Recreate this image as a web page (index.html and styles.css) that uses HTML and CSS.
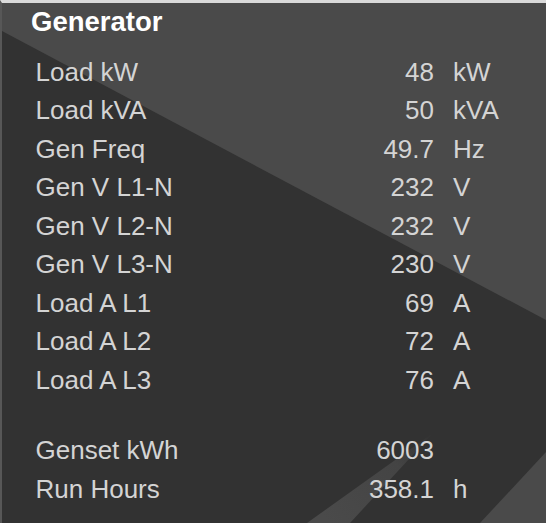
FILE: index.html
```html
<!DOCTYPE html>
<html lang="en">
<head>
<meta charset="utf-8">
<title>Generator</title>
<link rel="stylesheet" href="styles.css">
</head>
<body>
<section class="panel">
  <svg class="backdrop" viewBox="0 0 546 523" preserveAspectRatio="none" aria-hidden="true">
    <defs>
      <linearGradient id="streak" x1="433" y1="433" x2="330" y2="523" gradientUnits="userSpaceOnUse">
        <stop offset="0" stop-color="#4a4a4a" stop-opacity="0"/>
        <stop offset="0.35" stop-color="#4a4a4a" stop-opacity="0.75"/>
        <stop offset="1" stop-color="#4a4a4a" stop-opacity="1"/>
      </linearGradient>
    </defs>
    <polygon points="0,0 546,0 546,320 0,30" fill="#4a4a4a"/>
    <polygon points="433,433 350,523 307,523" fill="url(#streak)"/>
    <polygon points="546,452 546,523 480,523" fill="#4a4a4a"/>
  </svg>
  <h1 class="title">Generator</h1>
  <div class="readings">
    <span class="label">Load kW</span><span class="value">48</span><span class="unit">kW</span>
    <span class="label">Load kVA</span><span class="value">50</span><span class="unit">kVA</span>
    <span class="label">Gen Freq</span><span class="value">49.7</span><span class="unit">Hz</span>
    <span class="label">Gen V L1-N</span><span class="value">232</span><span class="unit">V</span>
    <span class="label">Gen V L2-N</span><span class="value">232</span><span class="unit">V</span>
    <span class="label">Gen V L3-N</span><span class="value">230</span><span class="unit">V</span>
    <span class="label">Load A L1</span><span class="value">69</span><span class="unit">A</span>
    <span class="label">Load A L2</span><span class="value">72</span><span class="unit">A</span>
    <span class="label">Load A L3</span><span class="value">76</span><span class="unit">A</span>
    <span class="spacer"></span>
    <span class="label">Genset kWh</span><span class="value">6003</span><span class="unit"></span>
    <span class="label">Run Hours</span><span class="value">358.1</span><span class="unit">h</span>
  </div>
</section>
</body>
</html>
```

FILE: styles.css
```css
html, body {
  margin: 0;
  padding: 0;
  background: #323232;
}

.panel {
  position: relative;
  box-sizing: border-box;
  width: 546px;
  height: 523px;
  overflow: hidden;
  background: #323232;
  border-top: 3px solid #dadada;
  border-left: 2px solid #575757;
  padding: 3px 0 0 29px;
  font-family: "Liberation Sans", Arial, Helvetica, sans-serif;
}

.backdrop {
  position: absolute;
  top: -3px;
  left: -2px;
  width: 546px;
  height: 523px;
  z-index: 0;
}

.title {
  position: relative;
  z-index: 1;
  margin: 0;
  font-size: 27.5px;
  line-height: 32px;
  font-weight: bold;
  color: #ffffff;
}

.readings {
  position: relative;
  z-index: 1;
  margin-top: 14.5px;
  margin-left: 4.5px;
  display: grid;
  grid-template-columns: 254.5px 125px auto;
  column-gap: 19px;
  font-size: 26px;
  line-height: 38.5px;
  color: #d4d4d4;
}

.value {
  text-align: right;
}

.spacer {
  grid-column: 1 / -1;
  height: 32px;
}
```
